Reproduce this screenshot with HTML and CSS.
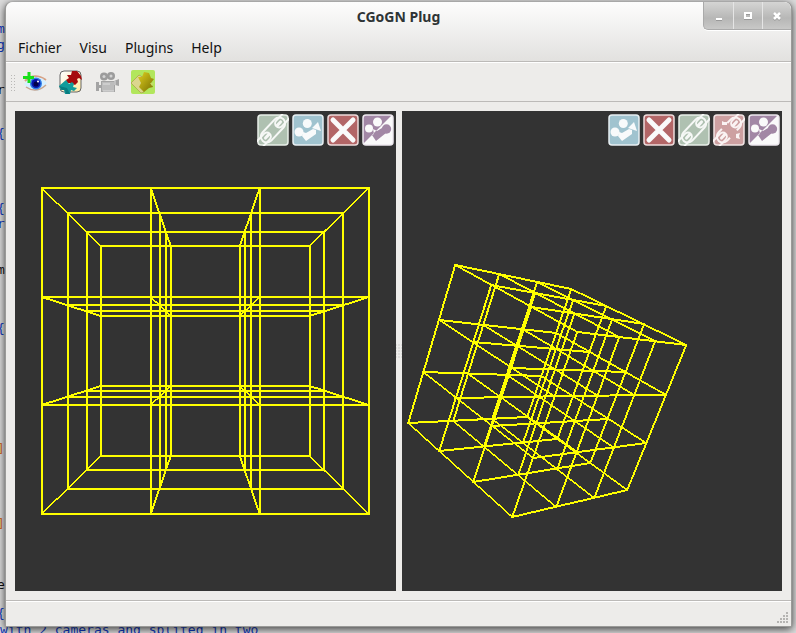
FILE: index.html
```html
<!DOCTYPE html>
<html lang="fr">
<head>
<meta charset="utf-8">
<title>CGoGN Plug</title>
<link rel="stylesheet" href="styles.css">
</head>
<body>
<svg class="symbols" aria-hidden="true">
  <defs>
    <clipPath id="upper"><path d="M0 31V0H31z"/></clipPath>
    <clipPath id="lower"><path d="M0 31L31 0H32V32H0z"/></clipPath>
    <g id="camera-shape">
      <path d="M11 15l4 2 5-3 4 5-10 8-4-6 2-1z"/>
      <circle cx="15.500" cy="8" r="4.500"/>
      <circle cx="7" cy="14.500" r="4"/>
      <circle cx="24.500" cy="15" r="4.700"/>
    </g>
  </defs>
  <symbol id="link" viewBox="0 0 32 32">
    <rect x="1" y="1" width="30" height="30" rx="3" fill="#afc1b1" stroke="#e9efe9" stroke-width="1.5"/>
    <g fill="none" stroke="#f6f8f6" transform="rotate(-47 16 16)">
      <rect x="1" y="10" width="30" height="12" rx="6" stroke-width="2"/>
      <path d="M-5 12H7a4 4 0 0 1 0 8H-5M37 12H25a4 4 0 0 0 0 8H37" stroke-width="2"/>
      <path d="M5 16h5M22 16h5" stroke-width="3" stroke-linecap="round"/>
    </g>
  </symbol>
  <symbol id="camera" viewBox="0 0 32 32">
    <rect x="1" y="1" width="30" height="30" rx="3" fill="#a0c3cf" stroke="#e8f0f3" stroke-width="1.5"/>
    <path fill="#f8fafb" d="M11 18l3 1 7-4 3 1v4l-10 7-4-5zM20 14l6-6 3 9z"/>
    <circle cx="15.3" cy="9.5" r="4.5" fill="#f8fafb"/>
    <circle cx="7" cy="18" r="4.5" fill="#f8fafb"/>
  </symbol>
  <symbol id="cross" viewBox="0 0 32 32">
    <rect x="1" y="1" width="30" height="30" rx="3" fill="#b36667" stroke="#eedcdc" stroke-width="1.5"/>
    <path d="M6 6L26 26M26 6L6 26" stroke="#fafafa" stroke-width="5" stroke-linecap="round"/>
  </symbol>
  <symbol id="unlink" viewBox="0 0 32 32">
    <rect x="1" y="1" width="30" height="30" rx="3" fill="#cda0a1" stroke="#f1e4e4" stroke-width="1.5"/>
    <g fill="none" stroke="#faf3f3" transform="rotate(-47 16 16)">
      <path d="M12 10H7a6 6 0 0 0 0 12h4M20 10h5a6 6 0 0 1 0 12h-4" stroke-width="2"/>
      <path d="M-5 12H7a4 4 0 0 1 0 8H-5M37 12H25a4 4 0 0 0 0 8H37" stroke-width="2"/>
      <path d="M5 16h5M22 16h5" stroke-width="3" stroke-linecap="round"/>
    </g>
    <path fill="#faf3f3" d="M9 7l2 1h3v3H9zM23 20l4-1-1 3 1 3-4-1z"/>
  </symbol>
  <symbol id="cameras" viewBox="0 0 32 32">
    <rect x="1" y="1" width="30" height="30" rx="3" fill="#fafafa"/>
    <path d="M1 30V3q0-2 2-2h27z" fill="#a287a5"/>
    <use href="#camera-shape" fill="#fafafa" clip-path="url(#upper)"/>
    <use href="#camera-shape" fill="#a287a5" clip-path="url(#lower)"/>
    <rect x="1" y="1" width="30" height="30" rx="3" fill="none" stroke="#eee9ef" stroke-width="1.500"/>
  </symbol>
</svg>

<div class="backdrop" aria-hidden="true">
  <span class="code r1">m</span><span class="code r2">g</span>
  <span class="code r3 dark">r</span><span class="code r4">{</span>
  <span class="code r5">{</span><span class="code r6">r</span>
  <span class="code r7 dark">m</span><span class="code r8">{</span>
  <span class="code r9 orange">]</span><span class="code r10 orange">]</span>
  <span class="code r11 dark">e</span><span class="code r12">{</span>
  <span class="code r13">with 2 cameras and splited in two</span>
</div>

<div class="window">
  <header class="chrome">
    <div class="titlebar">
      <h1 class="title">CGoGN Plug</h1>
      <div class="controls">
        <button class="control" aria-label="Minimize"><svg viewBox="0 0 10 10"><path d="M2 9h6" stroke="#999" stroke-width="2"/><path d="M2 8h6" stroke="#fff" stroke-width="2"/></svg></button>
        <button class="control" aria-label="Maximize"><svg viewBox="0 0 10 10"><path d="M2 3h6v5H2z" fill="none" stroke="#999" stroke-width="2"/><path d="M2 2h6v5H2z" fill="none" stroke="#fff" stroke-width="2"/></svg></button>
        <button class="control" aria-label="Close"><svg viewBox="0 0 10 10"><path d="M2 3l6 6M8 3L2 9" stroke="#999" stroke-width="2.500"/><path d="M2 2l6 6M8 2L2 8" stroke="#fff" stroke-width="2.500"/></svg></button>
      </div>
    </div>
    <nav class="menubar">
      <button class="menu">Fichier</button>
      <button class="menu">Visu</button>
      <button class="menu">Plugins</button>
      <button class="menu">Help</button>
    </nav>
  </header>

  <div class="toolbar">
    <span class="grip"></span>
    <button class="tool" aria-label="Add view">
      <svg viewBox="0 0 24 24">
        <path d="M2 11Q11 2 23 10" fill="none" stroke="#d7a184" stroke-width="2"/>
        <path d="M1 14Q7 7 13 7q7 0 11 6-4 8-11 8-7 0-12-7z" fill="#d5efff"/>
        <path d="M3 17q10 7 20-2" fill="none" stroke="#c9a48c" stroke-width="1.500"/>
        <circle cx="13" cy="13.500" r="6" fill="#2f7fe8"/><circle cx="13" cy="13.500" r="4.500" fill="#0714a8"/><circle cx="13" cy="14" r="2.500" fill="#02024a"/><circle cx="15" cy="11.500" r="1" fill="#fff"/>
        <path d="M6 2v11M0 7.500h11" stroke="#18df18" stroke-width="3"/>
      </svg>
    </button>
    <button class="tool" aria-label="Plugins">
      <svg viewBox="0 0 24 24">
        <defs><linearGradient id="card" x2="1" y2="1"><stop stop-color="#fff"/><stop offset="1" stop-color="#ffe9a0"/></linearGradient></defs>
        <rect x="1" y="1" width="21" height="21" rx="4" fill="url(#card)" stroke="#666"/>
        <path d="M8 5l4 0 1-4 5 0 4 5 1 4-3-2-2 1 1 3-3 3-4-2-4 0-1-3 3-2z" fill="#a50b0d"/>
        <path d="M0 16l7-6 3 4 3-2 2 2-1 3 4 1-3 3-3-1-1 4-5 0-1-4-3 0z" fill="#109b9b"/>
        <path d="M0 16l3 4 3 0 1 4 4 0-3-6z" fill="#087c80"/>
      </svg>
    </button>
    <button class="tool" aria-label="Camera">
      <svg viewBox="0 0 24 24">
        <path d="M1 12h3v3h2v-4h13l5-2v7l-4-1v7H6v-4H4v3H1z" fill="#a4a4a4"/>
        <circle cx="9" cy="6.500" r="4" fill="#9c9c9c"/><circle cx="16" cy="6" r="4" fill="#9c9c9c"/>
        <circle cx="9" cy="6.500" r="1.500" fill="#d3d3d3"/><circle cx="16" cy="6" r="1.500" fill="#d3d3d3"/>
        <path d="M7 12h12v9H7z" fill="#bcbcbc"/><path d="M8 14h7M8 21h11M20 11v4" stroke="#dedede"/>
      </svg>
    </button>
    <button class="tool" aria-label="Plugin">
      <svg viewBox="0 0 24 24">
        <defs><linearGradient id="gold" x2="1" y2="1"><stop stop-color="#e0cf20"/><stop offset="1" stop-color="#776e00"/></linearGradient></defs>
        <rect width="24" height="24" rx="2" fill="#b2e65c"/>
        <path d="M0 13l8-8 5 3v14l-3 1z" fill="#dcd68e" stroke="#a79e48" stroke-width=".7"/>
        <path d="M7 7l4 0 2-5 5 1 2 5 3 1-3 4 2 4-4 1-5 4-5-5 2-4z" fill="url(#gold)"/>
        <path d="M19 13h4l-2 3z" fill="#c5dc69"/>
      </svg>
    </button>
  </div>

  <main class="workspace">
    <section class="view">
      <svg class="scene" id="front" viewBox="15 111 381 480" role="img" aria-label="Front view of the grid"></svg>
      <div class="actions">
        <button class="action" aria-label="Link"><svg><use href="#link"/></svg></button>
        <button class="action" aria-label="Camera"><svg><use href="#camera"/></svg></button>
        <button class="action" aria-label="Close view"><svg><use href="#cross"/></svg></button>
        <button class="action" aria-label="Switch cameras"><svg><use href="#cameras"/></svg></button>
      </div>
    </section>
    <div class="splitter"></div>
    <section class="view">
      <svg class="scene" id="perspective" viewBox="402 111 380 480" role="img" aria-label="Rotated view of the grid"></svg>
      <div class="actions">
        <button class="action" aria-label="Camera"><svg><use href="#camera"/></svg></button>
        <button class="action" aria-label="Close view"><svg><use href="#cross"/></svg></button>
        <button class="action" aria-label="Link"><svg><use href="#link"/></svg></button>
        <button class="action" aria-label="Unlink"><svg><use href="#unlink"/></svg></button>
        <button class="action" aria-label="Switch cameras"><svg><use href="#cameras"/></svg></button>
      </div>
    </section>
  </main>

  <footer class="statusbar">
    <svg class="sizegrip" viewBox="0 0 12 12" aria-hidden="true"><path d="M9 0h2v2H9zM6 3h2v2H6zM9 3h2v2H9zM3 6h2v2H3zM6 6h2v2H6zM9 6h2v2H9zM0 9h2v2H0zM3 9h2v2H3zM6 9h2v2H6zM9 9h2v2H9z" fill="#b5b4b2"/></svg>
  </footer>
</div>
<script src="scene.js"></script>
</body>
</html>
```
FILE: styles.css
```css
* { box-sizing: border-box; }

body {
  margin: 0;
  height: 100vh;
  padding: 2px 5px 6px;
  overflow: hidden;
  background: #dcdcdc;
  font-family: "Noto Sans", "Open Sans", sans-serif;
  font-size: 14px;
  color: #111;
}

button {
  margin: 0;
  padding: 0;
  border: 0;
  background: none;
  font: inherit;
  color: inherit;
}

svg { display: block; }

.symbols {
  position: absolute;
  width: 0;
  height: 0;
}

.backdrop {
  position: absolute;
  inset: 0;
  overflow: hidden;
}

.code {
  position: absolute;
  left: -3px;
  font: 13px/16px "DejaVu Sans Mono", monospace;
  color: #1038c0;
  white-space: pre;
}

.dark { color: #111; }
.orange { color: #d06a20; }
.r1 { top: 21px; }
.r2 { top: 37px; }
.r3 { top: 82px; }
.r4 { top: 126px; }
.r5 { top: 201px; }
.r6 { top: 216px; }
.r7 { top: 262px; }
.r8 { top: 321px; }
.r9 { top: 441px; }
.r10 { top: 516px; }
.r11 { top: 577px; }
.r12 { top: 606px; }
.r13 { top: 622px; left: 0; }

.window {
  position: relative;
  display: flex;
  flex-direction: column;
  height: 100%;
  border: 1px solid #9a9a98;
  border-top: 0;
  border-radius: 7px 7px 0 0;
  background: #edecea;
  box-shadow: 0 0 1px #777, 0 2px 9px rgba(0, 0, 0, .75);
  margin-right: -1px;
}

.chrome {
  border-bottom: 1px solid #bcbab8;
  border-radius: 7px 7px 0 0;
  background: linear-gradient(#fdfdfd, #e2e1df);
}

.titlebar {
  display: grid;
  grid-template-columns: 1fr auto 1fr;
  height: 29px;
}

.title {
  grid-column: 2;
  margin: 0;
  font-size: 14px;
  line-height: 30px;
  font-weight: 700;
  color: #2e3436;
}

.controls {
  display: flex;
  justify-self: end;
  height: 28px;
  overflow: hidden;
  border: 1px solid #aaa;
  border-width: 0 0 1px 1px;
  border-radius: 0 7px 0 5px;
  background: linear-gradient(#d5d5d4, #b7b7b6 60%, #c8c8c7);
  box-shadow: 0 1px #fff;
}

.control {
  display: grid;
  place-items: center;
  width: 29px;
}

.control + .control {
  border-left: 1px solid #e5e5e5;
}

.control svg {
  width: 10px;
  height: 10px;
}

.menubar {
  display: flex;
  gap: 18px;
  height: 30px;
  padding: 0 12px;
}

.menu {
  line-height: 34px;
}

.toolbar {
  display: flex;
  align-items: center;
  gap: 12px;
  height: 40px;
  padding: 0 4px;
  border-top: 1px solid #fff;
  border-bottom: 1px solid #bcbab8;
}

.grip {
  width: 5px;
  height: 17px;
  margin-right: -4px;
  background: radial-gradient(circle, #b9b8b6 0 1px, transparent 1px) 0 0 / 3px 3px;
}

.tool svg {
  width: 24px;
  height: 24px;
}

.workspace {
  display: flex;
  flex: 1;
  min-height: 0;
  padding: 9px;
}

.view {
  position: relative;
  flex: 1;
  min-width: 0;
  background: #333;
}

.scene {
  width: 100%;
  height: 100%;
}

.scene line {
  stroke: #ff0;
  stroke-linecap: square;
}

.actions {
  position: absolute;
  top: 3px;
  right: 2px;
  display: flex;
  gap: 3px;
}

.action svg {
  width: 32px;
  height: 32px;
}

.splitter {
  width: 6px;
  padding: 232px 0;
  background: radial-gradient(circle, #b0afad 0 1px, transparent 1px) center / 3px 3px;
  background-clip: content-box;
}

.statusbar {
  display: flex;
  justify-content: flex-end;
  align-items: flex-end;
  height: 26px;
  padding: 2px;
  border-top: 1px solid #bcbab8;
  box-shadow: inset 0 1px #fff;
}

.sizegrip {
  width: 12px;
  height: 12px;
}
```
FILE: scene.js
```js
// Each corner is [x, y, weight]; order is the binary count of the (u, v, w) axes.
const scenes = {
  front: [
    [42, 188, 1], [369, 188, 1], [42, 514, 1], [369, 514, 1],
    [101, 246, 1.565], [310, 246, 1.565], [101, 456, 1.565], [310, 456, 1.565]
  ],
  perspective: [
    [455, 265, 1], [571, 289, 1.226], [577, 332, 0.826], [686, 345, 1.052],
    [408, 423, 1.058], [527, 417, 1.284], [512, 517, 0.884], [627, 490, 1.11]
  ]
};

// Homogeneous blend of the eight corners.
function project(corners, u, v, w) {
  let x = 0, y = 0, total = 0;
  corners.forEach(([cx, cy, weight], i) => {
    const k = weight * (i & 1 ? u : 1 - u) * (i & 2 ? v : 1 - v) * (i & 4 ? w : 1 - w);
    x += cx * k;
    y += cy * k;
    total += k;
  });
  return [x / total, y / total];
}

function drawLine(svg, [x1, y1], [x2, y2]) {
  const line = document.createElementNS("http://www.w3.org/2000/svg", "line");
  const dx = Math.abs(x2 - x1), dy = Math.abs(y2 - y1);
  const width = 2 * Math.max(dx, dy) / Math.hypot(dx, dy);
  const values = { x1: Math.round(x1), y1: Math.round(y1), x2: Math.round(x2), y2: Math.round(y2), "stroke-width": width, "shape-rendering": "crispEdges" };
  for (const name in values) line.setAttribute(name, values[name]);
  svg.append(line);
}

for (const id in scenes) {
  const svg = document.getElementById(id);
  const at = (u, v, w) => project(scenes[id], u, v, w);
  for (let i = 0; i < 4; i++) {
    for (let j = 0; j < 4; j++) {
      const a = i / 3, b = j / 3;
      drawLine(svg, at(0, a, b), at(1, a, b));
      drawLine(svg, at(a, 0, b), at(a, 1, b));
      drawLine(svg, at(a, b, 0), at(a, b, 1));
    }
  }
}
```
